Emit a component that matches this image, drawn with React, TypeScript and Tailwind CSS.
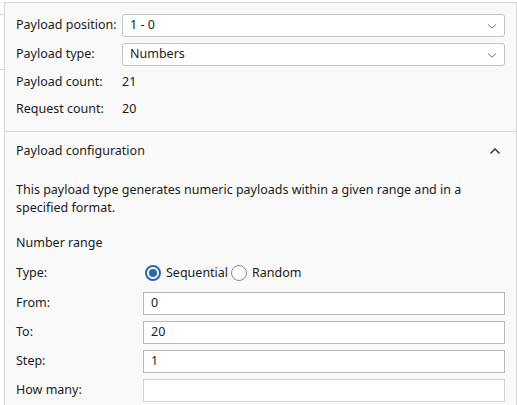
import React from 'react';

const font = { fontFamily: '"Noto Sans", "Segoe UI", sans-serif' };

function Chevron({ up = false }: { up?: boolean }) {
  return (
    <svg width="12" height="8" viewBox="0 0 12 8" className={up ? 'text-[#444]' : 'text-[#777]'}>
      {up ? (
        <path d="M1.5 6.5 L6 2 L10.5 6.5" fill="none" stroke="currentColor" strokeWidth="1.6" />
      ) : (
        <path d="M2 2.5 L6 6 L10 2.5" fill="none" stroke="currentColor" strokeWidth="1" />
      )}
    </svg>
  );
}

function Select({ value }: { value: string }) {
  return (
    <div className="flex-1 h-[23px] bg-white border border-[#c4c4c4] rounded-[3px] flex items-center justify-between pl-[7px] pr-[6px]">
      <span>{value}</span>
      <Chevron />
    </div>
  );
}

function Field({ label, value, disabled }: { label: string; value?: string; disabled?: boolean }) {
  return (
    <div className="flex items-center h-[23px]">
      <div className="w-[127px]">{label}</div>
      <div
        className={
          'flex-1 h-[23px] bg-white border flex items-center pl-[7px] ' +
          (disabled ? 'border-[#d4d4d4]' : 'border-[#b8b8b8]')
        }
      >
        {value}
      </div>
    </div>
  );
}

function Radio({ checked, label }: { checked?: boolean; label: string }) {
  return (
    <div className="flex items-center gap-[5px]">
      {checked ? (
        <div className="w-[16px] h-[16px] rounded-full border-[2px] border-[#2c6aa6] flex items-center justify-center">
          <div className="w-[8px] h-[8px] rounded-full bg-[#2c6aa6]" />
        </div>
      ) : (
        <div className="w-[16px] h-[16px] rounded-full border border-[#8a8a8a] bg-white" />
      )}
      <span>{label}</span>
    </div>
  );
}

export default function App() {
  return (
    <div className="w-[517px] h-[405px] flex bg-white text-[12.5px] text-[#1b1b1b] overflow-hidden" style={font}>
      <div className="w-[4px] flex flex-col">
        <div className="h-[15px] border-b border-[#d6d6d6]" />
        <div className="h-[55px] border-b border-[#d6d6d6]" />
      </div>
      <div className="flex-1 mt-[2px] bg-[#f9f9f9] border-l border-t border-r border-[#d6d6d6] flex flex-col">
        <div className="px-[11px] pt-[11px] pb-[11px] flex flex-col gap-[6px] border-b border-[#d6d6d6]">
          <div className="flex items-center h-[23px]">
            <div className="w-[106px]">Payload position:</div>
            <Select value="1 - 0" />
          </div>
          <div className="flex items-center h-[23px]">
            <div className="w-[106px]">Payload type:</div>
            <Select value="Numbers" />
          </div>
          <div className="flex items-center h-[21px]">
            <div className="w-[106px]">Payload count:</div>
            <div>21</div>
          </div>
          <div className="flex items-center h-[21px]">
            <div className="w-[106px]">Request count:</div>
            <div>20</div>
          </div>
        </div>
        <div className="px-[11px] flex flex-col">
          <div className="h-[38px] flex items-center justify-between pr-[4px]">
            <span>Payload configuration</span>
            <Chevron up />
          </div>
          <p className="mt-[11px] leading-[18px]">
            This payload type generates numeric payloads within a given range and in a specified format.
          </p>
          <div className="mt-[17px] h-[18px] flex items-center">Number range</div>
          <div className="mt-[10px] h-[22px] flex items-center">
            <div className="w-[129px]">Type:</div>
            <div className="flex items-center gap-[3px]">
              <Radio checked label="Sequential" />
              <Radio label="Random" />
            </div>
          </div>
          <div className="mt-[8px] flex flex-col gap-[6px]">
            <Field label="From:" value="0" />
            <Field label="To:" value="20" />
            <Field label="Step:" value="1" />
            <Field label="How many:" disabled />
          </div>
        </div>
      </div>
    </div>
  );
}
